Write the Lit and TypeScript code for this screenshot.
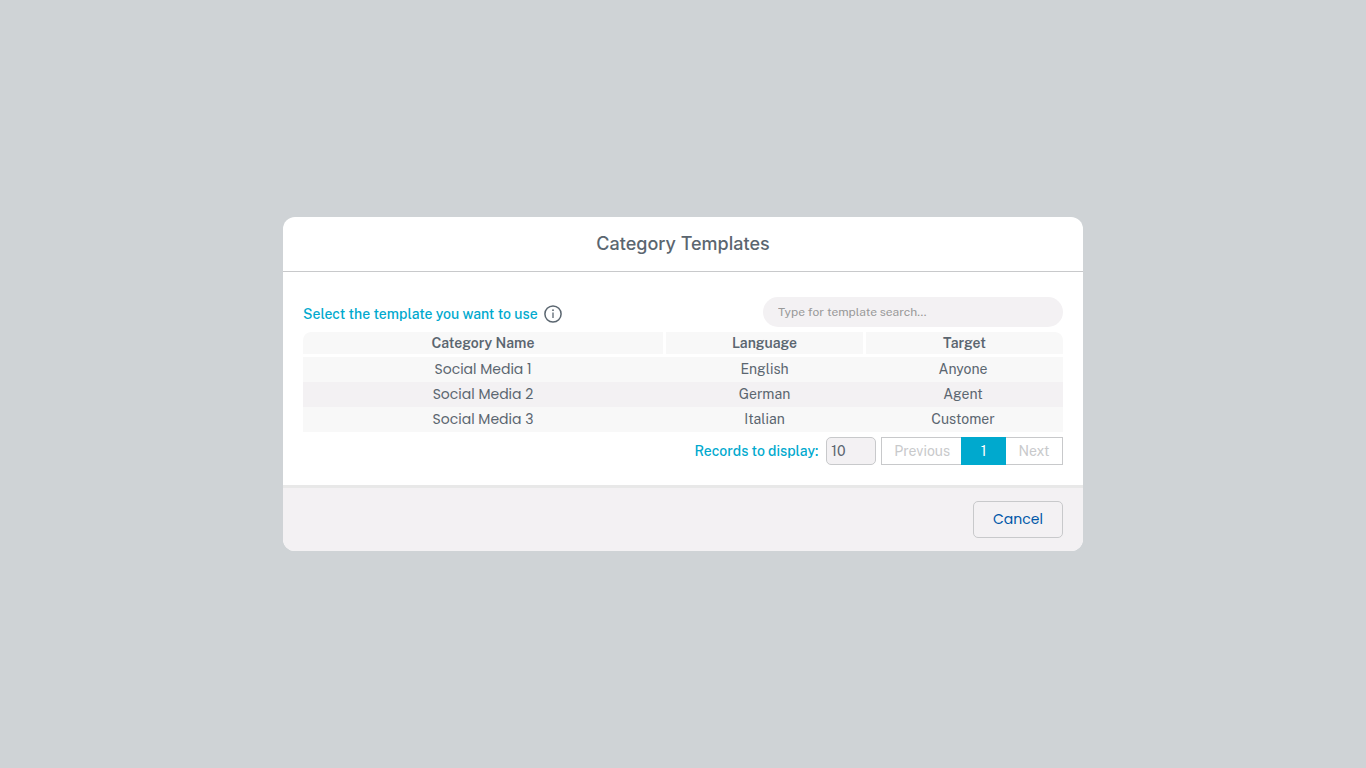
import { LitElement, html, css } from "lit";
import { customElement, property, state } from "lit/decorators.js";

interface Template {
  name: string;
  language: string;
  target: string;
}

@customElement("info-icon")
class InfoIcon extends LitElement {
  static styles = css`
    :host {
      display: block;
      width: 18px;
      height: 18px;
      color: #5b6670;
    }
    svg {
      display: block;
    }
  `;

  render() {
    return html`<svg width="18" height="18" viewBox="0 0 18 18" fill="none" role="img" aria-label="Information">
      <circle cx="9" cy="9" r="8.1" stroke="currentColor" stroke-width="1.5" />
      <path d="M9 7.6V13" stroke="currentColor" stroke-width="1.3" />
      <circle cx="9" cy="5.2" r="0.9" fill="currentColor" />
    </svg>`;
  }
}

@customElement("template-table")
class TemplateTable extends LitElement {
  @property({ attribute: false }) rows: Template[] = [];

  static styles = css`
    :host {
      display: block;
    }
    table {
      width: 100%;
      table-layout: fixed;
      border-collapse: separate;
      border-spacing: 0;
      text-align: center;
      font-size: 14px;
      line-height: 22px;
      color: #5b6670;
    }
    .language {
      width: 200px;
    }
    .target {
      width: 197px;
    }
    th {
      padding: 0;
      font-weight: 600;
      background: #f8f8f8;
      background-clip: padding-box;
      border-right: 3px solid transparent;
      border-bottom: 3px solid transparent;
    }
    th:first-child {
      border-top-left-radius: 8px;
    }
    th:last-child {
      border-right: 0;
      border-top-right-radius: 8px;
    }
    td {
      padding: 1px 3px 2px 0;
      background: #f8f8f8;
    }
    tr:nth-child(even) td {
      background: #f3f1f3;
    }
    .name {
      font-family: Poppins, Inter, sans-serif;
    }
  `;

  render() {
    return html`<table>
      <colgroup>
        <col />
        <col class="language" />
        <col class="target" />
      </colgroup>
      <thead>
        <tr>
          <th scope="col">Category Name</th>
          <th scope="col">Language</th>
          <th scope="col">Target</th>
        </tr>
      </thead>
      <tbody>
        ${this.rows.map(
          (row) => html`<tr>
            <td class="name">${row.name}</td>
            <td>${row.language}</td>
            <td>${row.target}</td>
          </tr>`
        )}
      </tbody>
    </table>`;
  }
}

@customElement("app-root")
class AppRoot extends LitElement {
  @state() private query = "";

  private templates: Template[] = [
    { name: "Social Media 1", language: "English", target: "Anyone" },
    { name: "Social Media 2", language: "German", target: "Agent" },
    { name: "Social Media 3", language: "Italian", target: "Customer" },
  ];

  static styles = css`
    :host {
      display: grid;
      place-items: center;
      min-height: 100vh;
      background: #cfd3d6;
      color: #5b6670;
      font-family: "Public Sans", Inter, sans-serif;
      font-size: 14px;
      line-height: 20px;
    }
    * {
      box-sizing: border-box;
    }
    input,
    select,
    button {
      margin: 0;
      font: inherit;
      color: inherit;
    }
    .dialog {
      width: 100%;
      max-width: 800px;
      border-radius: 12px;
      overflow: hidden;
      background: #fff;
    }
    header {
      padding: 15px 20px;
      border-bottom: 1px solid #c8c9cb;
      text-align: center;
    }
    h1 {
      margin: 0;
      font-family: Inter, sans-serif;
      font-size: 18px;
      line-height: 24px;
      font-weight: 500;
    }
    .body {
      display: grid;
      gap: 5px;
      padding: 25px 20px 20px;
    }
    .toolbar {
      display: flex;
      align-items: flex-end;
      justify-content: space-between;
      gap: 20px;
    }
    .prompt {
      display: flex;
      align-items: center;
      gap: 6px;
      padding-bottom: 3px;
      color: #00a9ce;
      font-weight: 500;
    }
    .search {
      width: 300px;
      height: 30px;
      padding: 0 15px;
      border: 0;
      border-radius: 15px;
      background: #f3f1f3;
      font-size: 12px;
    }
    .search::placeholder {
      color: #999;
      opacity: 1;
    }
    .pager {
      display: flex;
      justify-content: flex-end;
      align-items: center;
      gap: 5px;
    }
    .records {
      display: flex;
      align-items: center;
      gap: 8px;
      color: #00a9ce;
      font-weight: 500;
    }
    select {
      appearance: none;
      width: 50px;
      height: 28px;
      padding: 0 4px;
      border: 1px solid #c8c9cb;
      border-radius: 5px;
      background: #f3f1f3;
      color: #5b6670;
      font-weight: 400;
    }
    .pages {
      display: flex;
      height: 28px;
      border: 1px solid #c8c9cb;
    }
    .pages button {
      min-width: 56px;
      padding: 0 12px;
      border: 0;
      background: #fff;
      color: #c8c9cb;
    }
    .pages .current {
      min-width: 45px;
      margin: -1px 0 -1px -1px;
      background: #00a9ce;
      color: #fff;
    }
    footer {
      display: flex;
      justify-content: flex-end;
      padding: 13px 20px;
      border-top: 3px solid #e8e8e8;
      background: #f3f1f3;
    }
    .cancel {
      width: 90px;
      height: 37px;
      padding: 0 0 2px;
      border: 1px solid #c8c9cb;
      border-radius: 5px;
      background: transparent;
      color: #0057a8;
      font-family: Poppins, Inter, sans-serif;
    }
  `;

  private onSearch(event: Event) {
    this.query = (event.target as HTMLInputElement).value;
  }

  render() {
    const needle = this.query.toLowerCase();
    const rows = this.templates.filter((t) => t.name.toLowerCase().includes(needle));
    return html`<section class="dialog" role="dialog" aria-labelledby="title">
      <header><h1 id="title">Category Templates</h1></header>
      <div class="body">
        <div class="toolbar">
          <label class="prompt" for="search">Select the template you want to use <info-icon></info-icon></label>
          <input id="search" class="search" type="text" placeholder="Type for template search..." @input=${this.onSearch} />
        </div>
        <template-table .rows=${rows}></template-table>
        <div class="pager">
          <label class="records">
            Records to display:
            <select>
              <option>10</option>
              <option>25</option>
              <option>50</option>
            </select>
          </label>
          <nav class="pages" aria-label="Pages">
            <button disabled>Previous</button>
            <button class="current" aria-current="page">1</button>
            <button disabled>Next</button>
          </nav>
        </div>
      </div>
      <footer><button class="cancel">Cancel</button></footer>
    </section>`;
  }
}
